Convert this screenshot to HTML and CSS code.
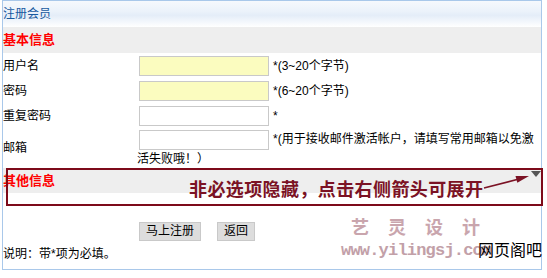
FILE: index.html
```html
<!DOCTYPE html>
<html lang="zh-CN">
<head>
<meta charset="utf-8">
<title>注册会员</title>
<link rel="stylesheet" href="styles.css">
</head>
<body>
<div class="box">
  <div class="head">注册会员</div>
  <div class="sec">基本信息</div>
  <div class="row">
    <div class="lbl">用户名</div>
    <div class="fld"><input class="inp req" type="text"><span>*(3~20个字节)</span></div>
  </div>
  <div class="row">
    <div class="lbl">密码</div>
    <div class="fld"><input class="inp req" type="password"><span>*(6~20个字节)</span></div>
  </div>
  <div class="row">
    <div class="lbl">重复密码</div>
    <div class="fld"><input class="inp" type="password"><span>*</span></div>
  </div>
  <div class="row row-tall">
    <div class="lbl">邮箱</div>
    <div class="fld fld-wrap"><input class="inp" type="text">*(用于接收邮件激活帐户，请填写常用邮箱以免激活失败哦！）</div>
  </div>
  <div class="sec sec-other"><span>其他信息</span><span class="tri"></span></div>
  <div class="btns"><button class="btn" type="button">马上注册</button><button class="btn" type="button">返回</button></div>
  <div class="note">说明：带*项为必填。</div>
</div>

<div class="anno-rect"></div>
<div class="anno-text">非必选项隐藏，点击右侧箭头可展开</div>
<svg class="anno-arrow" width="55" height="25" viewBox="0 0 55 25">
  <line x1="4" y1="18" x2="38" y2="9.3" stroke="#7b1224" stroke-width="1.6"/>
  <polygon points="49,6 37.3,12.8 35.5,6" fill="#7b1224"/>
</svg>
<div class="wm wm-cn">艺灵设计</div>
<div class="wm wm-url">www.yilingsj.com</div>
<div class="wm-site">网页阁吧</div>
</body>
</html>
```

FILE: styles.css
```css
html, body {
  margin: 0;
  padding: 0;
}
body {
  width: 547px;
  height: 278px;
  overflow: hidden;
  position: relative;
  background: #fff;
  color: #000;
  font: 12px/16px "Liberation Sans", "Noto Sans CJK SC", sans-serif;
}
.box {
  box-sizing: border-box;
  margin-left: 2px;
  width: 540px;
  height: 270px;
  border: 1px solid #a9c8ea;
}
.head {
  height: 26px;
  line-height: 26px;
  color: #17599f;
  background: linear-gradient(to bottom, #f6f9fd 0%, #ebf2fa 40%, #e4edf8 55%, #f3f7fc 80%, #ffffff 100%);
}
.sec {
  height: 26px;
  line-height: 26px;
  background: #eeeeee;
  color: #ff0000;
  font-weight: bold;
  font-size: 13px;
}
.row {
  display: grid;
  grid-template-columns: 134px 1fr;
  align-items: center;
  height: 25px;
}
.fld {
  display: flex;
  align-items: center;
}
.inp {
  box-sizing: border-box;
  width: 130px;
  height: 20px;
  margin: 0 4px 0 2px;
  padding: 0 2px;
  border: 1px solid #c9c9c9;
  background: #fff;
  font: inherit;
}
.inp.req {
  background: #fbfcbf;
}
.row-tall {
  height: 40px;
}
.fld-wrap {
  display: block;
  line-height: 18px;
  padding-top: 1px;
}
.fld-wrap .inp {
  vertical-align: middle;
}
.sec-other {
  height: 25px;
  line-height: 25px;
  display: flex;
  justify-content: space-between;
  align-items: flex-start;
}
.tri {
  width: 0;
  height: 0;
  margin-top: 3px;
  border-left: 5px solid transparent;
  border-right: 5px solid transparent;
  border-top: 6px solid #555;
}
.btns {
  margin-top: 29px;
  padding-left: 136px;
  display: flex;
  gap: 16px;
}
.btn {
  height: 19px;
  padding: 0 6px;
  border: 1px solid #c9c9c9;
  background: #dddddd;
  color: #000;
  font: 12px/17px "Liberation Sans", "Noto Sans CJK SC", sans-serif;
}
.note {
  margin-top: 5px;
  line-height: 16px;
}
.anno-rect {
  position: absolute;
  left: 6px;
  top: 168px;
  width: 537px;
  height: 38px;
  box-sizing: border-box;
  border: 2px solid #7d0a1a;
}
.anno-text {
  position: absolute;
  left: 189px;
  top: 179px;
  font: bold 18px/18px "Noto Sans CJK SC", sans-serif;
  letter-spacing: 0.4px;
  color: #7b1224;
  white-space: nowrap;
}
.anno-arrow {
  position: absolute;
  left: 480px;
  top: 170px;
}
.wm {
  position: absolute;
  white-space: nowrap;
}
.wm-cn {
  left: 351px;
  top: 217px;
  font: bold 18px/18px "Noto Sans CJK SC", sans-serif;
  letter-spacing: 19px;
  color: #c9a5ad;
}
.wm-url {
  left: 341px;
  top: 242px;
  font: bold 17px/17px "Liberation Mono", monospace;
  letter-spacing: -0.8px;
  color: #c2a0a8;
}
.wm-site {
  position: absolute;
  left: 478px;
  top: 241px;
  font: 16px/16px "Noto Sans CJK SC", sans-serif;
  color: #000;
  white-space: nowrap;
}
```
